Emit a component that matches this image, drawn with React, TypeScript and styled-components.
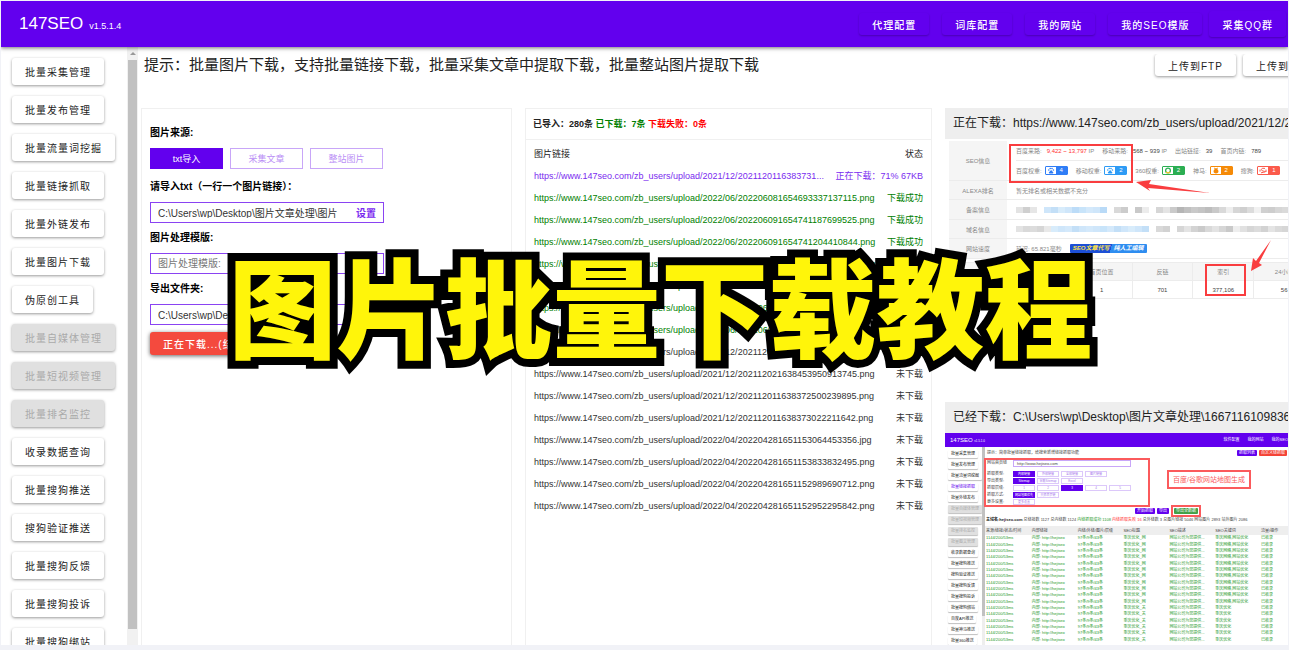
import React from "react";
import styled, { createGlobalStyle, css } from "styled-components";

const purple = "#6200ee";

const GlobalStyle = createGlobalStyle`
  *, *::before, *::after { box-sizing: border-box; }
  body {
    margin: 0;
    background: #f1f2f7;
    color: #222;
    font-family: "Liberation Sans", "Noto Sans CJK SC", sans-serif;
    font-size: 10px;
  }
  button, input { font-family: inherit; margin: 0; }
`;

const Page = styled.div`
  position: relative;
  height: 100vh;
  padding: 1px 1px 5px;
  overflow: hidden;
`;

const Shell = styled.div`
  height: 100%;
  display: flex;
  flex-direction: column;
  background: #fff;
  overflow: hidden;
`;

const TopBar = styled.header`
  position: relative;
  z-index: 1;
  flex: none;
  display: flex;
  align-items: center;
  justify-content: space-between;
  height: 46px;
  padding: 0 2px 0 18px;
  background: ${purple};
  color: #fff;
  box-shadow: 0 1px 4px rgba(0, 0, 0, 0.55);
`;

const Brand = styled.h1`
  display: flex;
  align-items: baseline;
  gap: 6px;
  margin: 0;
  font-size: 17px;
  font-weight: 400;
  small { font-size: 9px; }
`;

const Nav = styled.nav`
  display: flex;
  align-items: center;
  gap: 7px;
`;

const NavGroup = styled.div`
  display: flex;
  gap: 13px;
`;

const buttonBase = css`
  flex: none;
  border: 0;
  border-radius: 3px;
  padding: 0 13px;
  font-size: 10px;
  letter-spacing: 1px;
  white-space: nowrap;
`;

const NavButton = styled.button<{ $tall?: boolean }>`
  ${buttonBase}
  height: ${(p) => (p.$tall ? 26 : 22)}px;
  background: ${purple};
  color: #fff;
  font-weight: 500;
  box-shadow: 0 1px 2px rgba(0, 0, 0, 0.25);
`;

const RaisedButton = styled.button<{ $short?: boolean }>`
  ${buttonBase}
  height: ${(p) => (p.$short ? 22 : 27)}px;
  background: #fff;
  color: #222;
  box-shadow: 0 1px 3px rgba(0, 0, 0, 0.4);
  &:disabled { background: #e0e0e0; color: #aaa; }
`;

const Body = styled.div`
  flex: 1;
  min-height: 0;
  display: flex;
`;

const Sidebar = styled.aside`
  flex: none;
  display: flex;
  width: 137px;
`;

const Menu = styled.nav`
  flex: 1;
  display: flex;
  flex-direction: column;
  align-items: flex-start;
  gap: 11px;
  padding: 11px 0 0 11px;
  overflow: hidden;
`;

const Track = styled.div`
  display: flex;
  flex-direction: column;
  width: 11px;
  padding: 5px 1px 16px;
  background: #f1f1f1;
  align-items: center;
`;

const UpArrow = styled.div`
  border: 3px solid transparent;
  border-top: 0;
  border-bottom: 3px solid #999;
  margin-bottom: 5px;
`;

const Thumb = styled.div`
  flex: 1;
  width: 9px;
  background: #c1c1c1;
`;

const Main = styled.main`
  flex: 1;
  min-width: 0;
  display: flex;
  flex-direction: column;
`;

const HintRow = styled.div`
  flex: none;
  display: flex;
  justify-content: space-between;
  align-items: flex-start;
  height: 61px;
  padding: 7px 0 0 6px;
`;

const Hint = styled.p`
  margin: 0;
  font-size: 15px;
  line-height: 22px;
  white-space: nowrap;
`;

const Actions = styled.div`
  flex: none;
  display: flex;
  gap: 7px;
  width: 137px;
  padding: 0 0 4px 4px;
  overflow: hidden;
`;

const Columns = styled.div`
  flex: 1;
  min-height: 0;
  display: grid;
  grid-template-columns: 371fr 407fr 343fr;
  gap: 13px;
  padding-left: 3px;
`;

const Panel = styled.section`
  min-width: 0;
  overflow: hidden;
  border: 1px solid #f0f0f0;
  border-bottom: 0;
`;

const Form = styled.form`
  display: flex;
  flex-direction: column;
  align-items: flex-start;
  gap: 7px;
  padding: 16px 8px;
`;

const Field = styled.div`
  display: flex;
  flex-direction: column;
  gap: 7px;
`;

const Label = styled.label`
  font-weight: 700;
  line-height: 16px;
  color: #000;
`;

const Sources = styled.div`
  display: flex;
  gap: 7px;
  margin-bottom: 3px;
`;

const Source = styled.button<{ $on?: boolean }>`
  width: 73px;
  height: 21px;
  padding: 0;
  border: 1px solid ${(p) => (p.$on ? purple : "#c8a6f8")};
  background: ${(p) => (p.$on ? purple : "#fff")};
  color: ${(p) => (p.$on ? "#fff" : "#bb90f6")};
  font-size: 9px;
`;

const InputBox = styled.div`
  display: flex;
  align-items: center;
  width: 234px;
  height: 21px;
  padding: 0 7px;
  border: 1px solid #8a43f2;
  input {
    flex: 1;
    min-width: 0;
    border: 0;
    padding: 0;
    outline: 0;
    background: none;
    color: #333;
    font-size: 10px;
  }
  input::placeholder { color: #777; }
  a { margin-left: 12px; color: #7a2bef; font-weight: 700; text-decoration: none; }
`;

const StopButton = styled.button`
  ${buttonBase}
  height: 23px;
  background: #f44a3e;
  color: #fff;
  font-weight: 500;
  box-shadow: 0 1px 4px rgba(0, 0, 0, 0.6);
`;

const Summary = styled.p`
  margin: 0;
  padding: 0 7px;
  border-bottom: 1px solid #f0f0f0;
  font-size: 9px;
  font-weight: 700;
  line-height: 30px;
  color: #222;
  white-space: nowrap;
  .ok { color: #008000; }
  .bad { color: #f00; }
`;

const LinkTable = styled.table`
  display: block;
  margin-top: 3px;
  padding: 0 8px;
  font-size: 9px;
  line-height: 22px;
  white-space: nowrap;
  thead, tbody { display: block; }
  tr { display: flex; justify-content: space-between; }
  th, td { padding: 0; font-weight: 400; }
`;

const LinkRow = styled.tr<{ $state: string }>`
  color: ${(p) => (p.$state === "busy" ? "#7a2bef" : p.$state === "done" ? "#008000" : "#333")};
`;

const PreviewColumn = styled.section`
  min-width: 0;
  display: flex;
  flex-direction: column;
  overflow: hidden;
`;

const PreviewTitle = styled.h2`
  flex: none;
  margin: 0;
  padding: 0 0 0 8px;
  background: #eee;
  font-size: 12px;
  font-weight: 400;
  line-height: 31px;
  color: #222;
  white-space: nowrap;
  overflow: hidden;
`;

const SeoShot = styled.figure`
  position: relative;
  flex: none;
  height: 263px;
  margin: 0;
  padding: 2px 0 0 4px;
  overflow: hidden;
  font-size: 6px;
  color: #888;
  white-space: nowrap;
`;

const SeoRow = styled.div<{ $h: number }>`
  display: grid;
  grid-template-columns: 58px 1fr;
  height: ${(p) => p.$h}px;
  border-bottom: 1px solid #ececec;
`;

const SeoLabel = styled.div`
  display: flex;
  align-items: center;
  justify-content: center;
  background: #f5f5f5;
`;

const SeoCell = styled.div`
  display: flex;
  flex-direction: column;
  justify-content: center;
  padding-left: 9px;
`;

const SeoLine = styled.div<{ $rule?: boolean }>`
  flex: 1;
  display: flex;
  align-items: center;
  gap: 8px;
  border-bottom: ${(p) => (p.$rule ? "1px solid #ececec" : "0")};
  b { font-weight: 400; color: #444; margin-left: 5px; }
  b.hot { color: #f33; }
`;

const Metric = styled.span`
  display: flex;
  align-items: center;
`;

const Badge = styled.span<{ $c: string }>`
  display: flex;
  width: 23px;
  height: 9px;
  margin-left: 3px;
  border: 1px solid ${(p) => p.$c};
  border-radius: 1px;
  svg { width: 10px; height: 7px; }
  em {
    flex: 1;
    background: ${(p) => p.$c};
    color: #fff;
    font-style: normal;
    line-height: 7px;
    text-align: center;
  }
`;

const Mosaic = styled.div`
  display: flex;
  height: 6px;
`;

const Tile = styled.span<{ $c: string }>`
  flex: none;
  width: 7px;
  background: ${(p) => p.$c};
`;

const Promo = styled.span`
  width: 77px;
  height: 9px;
  background: linear-gradient(105deg, #1c4fd6 53%, #2e8df0 53%);
  border-radius: 1px;
  color: #fff;
  font-weight: 700;
  font-style: italic;
  line-height: 9px;
  text-align: center;
  i { color: #ffe34a; margin-right: 4px; }
`;

const StatTable = styled.table`
  width: 427px;
  margin-top: 3px;
  table-layout: fixed;
  border-collapse: collapse;
  text-align: center;
  th, td { height: 18px; padding: 0; border: 1px solid #ececec; font-weight: 400; }
  th { background: #f5f5f5; }
  td { color: #444; }
`;

const Marks = styled.svg`
  position: absolute;
  left: 0;
  top: 0;
`;

const AppShot = styled.figure`
  flex: 1;
  min-height: 0;
  margin: 0;
  display: flex;
  flex-direction: column;
  overflow: hidden;
  font-size: 4px;
  line-height: 6px;
  white-space: nowrap;
`;

const MiniBar = styled.div`
  flex: none;
  display: flex;
  align-items: center;
  gap: 8px;
  height: 14px;
  padding-left: 5px;
  background: ${purple};
  color: #fff;
  span:first-child { flex: 1; font-size: 6px; }
  small { font-size: 3px; }
`;

const MiniBody = styled.div`
  flex: 1;
  min-height: 0;
  display: flex;
`;

const MiniMenu = styled.div`
  flex: none;
  display: flex;
  flex-direction: column;
  align-items: flex-start;
  gap: 3px;
  width: 37px;
  padding: 3px 0 0 3px;
  overflow: hidden;
`;

const MiniItem = styled.span<{ $tone?: string }>`
  flex: none;
  height: 8px;
  padding: 0 3px;
  border-radius: 1px;
  line-height: 8px;
  background: ${(p) => (p.$tone === "off" ? "#e0e0e0" : "#fff")};
  color: ${(p) => (p.$tone === "off" ? "#aaa" : p.$tone === "on" ? purple : "#222")};
  box-shadow: 0 1px 1px rgba(0, 0, 0, 0.25);
`;

const MiniTrack = styled.div`
  flex: none;
  width: 3px;
  padding-bottom: 29px;
  background: #eee;
  &::before { content: ""; display: block; height: 100%; background: #c1c1c1; }
`;

const MiniMain = styled.div`
  flex: 1;
  min-width: 0;
  color: #444;
`;

const MiniHint = styled.div`
  display: flex;
  align-items: center;
  gap: 2px;
  height: 11px;
  padding: 0 1px 0 2px;
  span:first-child { flex: 1; }
`;

const MiniFormRow = styled.div`
  display: flex;
  align-items: center;
`;

const MiniForm = styled.div`
  width: 166px;
  height: 49px;
  padding: 0 0 0 1px;
  margin-left: -1px;
  border: 2px solid #fb5a5c;
`;

const MiniLine = styled.div<{ $first?: boolean }>`
  display: grid;
  grid-template-columns: 24px repeat(5, 22px);
  gap: 0 2px;
  height: 7px;
  margin-bottom: ${(p) => (p.$first ? 4 : 0)}px;
`;

const MiniInput = styled.span`
  grid-column: 2 / -1;
  height: 7px;
  padding-left: 3px;
  border: 1px solid #c8a6f8;
  line-height: 5px;
`;

const MiniChip = styled.span<{ $on?: boolean }>`
  height: 6px;
  border: 1px solid ${(p) => (p.$on ? purple : "#dcc8fa")};
  background: ${(p) => (p.$on ? purple : "#fff")};
  color: ${(p) => (p.$on ? "#fff" : "#a77bea")};
  font-size: 3px;
  line-height: 4px;
  text-align: center;
`;

const MapNote = styled.span`
  margin: 0 37px 6px auto;
  padding: 0 4px;
  border: 2px solid #fb5a5c;
  color: #fb5a5c;
  font-size: 7px;
  line-height: 15px;
`;

const MiniButton = styled.span<{ $c: string }>`
  padding: 0 2px;
  border-radius: 1px;
  background: ${(p) => p.$c};
  color: #fff;
  line-height: 6px;
`;

const MiniActions = styled.div`
  display: flex;
  align-items: center;
  gap: 2px;
  height: 11px;
  margin: -2px 0 0 150px;
`;

const Framed = styled.span`
  display: flex;
  padding: 1px;
  border: 2px solid #fb5a5c;
`;

const MiniStats = styled.div`
  height: 10px;
  padding-left: 1px;
  line-height: 8px;
  b { color: #222; }
  .ok { color: #1f9a2c; }
  .bad { color: #f33; }
`;

const MiniTable = styled.table`
  width: 321px;
  height: 117px;
  table-layout: fixed;
  border-spacing: 0;
  color: #1f9a2c;
  line-height: 4px;
  th { background: #eee; color: #444; font-weight: 400; height: 9px; }
  th, td { padding: 0 1px; text-align: left; overflow: hidden; }
`;

const Headline = styled.div`
  position: absolute;
  z-index: 2;
  left: 0;
  right: 0;
  top: 225px;
  padding-left: 32px;
  color: #fff50a;
  font-family: "Noto Sans CJK SC", sans-serif;
  font-size: 108px;
  font-weight: 900;
  line-height: 156px;
  text-align: center;
  white-space: nowrap;
  -webkit-text-stroke: 16px #000;
  paint-order: stroke fill;
  pointer-events: none;
`;

const menu: { name: string; off?: boolean }[] = [
  { name: "批量采集管理" },
  { name: "批量发布管理" },
  { name: "批量流量词挖掘" },
  { name: "批量链接抓取" },
  { name: "批量外链发布" },
  { name: "批量图片下载" },
  { name: "伪原创工具" },
  { name: "批量自媒体管理", off: true },
  { name: "批量短视频管理", off: true },
  { name: "批量排名监控", off: true },
  { name: "收录数据查询" },
  { name: "批量搜狗推送" },
  { name: "搜狗验证推送" },
  { name: "批量搜狗反馈" },
  { name: "批量搜狗投诉" },
  { name: "批量搜狗绑站" },
];

const root = "https://www.147seo.com/zb_users/upload/";
const links: [string, string, string][] = [
  ["2021/12/2021120116383731...", "正在下载：71% 67KB", "busy"],
  ["2022/06/202206081654693337137115.png", "下载成功", "done"],
  ["2022/06/202206091654741187699525.png", "下载成功", "done"],
  ["2022/06/202206091654741204410844.png", "下载成功", "done"],
  ["2022/06/202206091654741204410845.png", "下载成功", "done"],
  ["2022/06/202206091654741204410846.png", "下载成功", "done"],
  ["2022/06/202206091654741204410847.png", "下载成功", "done"],
  ["2022/06/202206091654741204410848.png", "下载成功", "done"],
  ["2021/12/202112021638453950913744.png", "未下载", "wait"],
  ["2021/12/202112021638453950913745.png", "未下载", "wait"],
  ["2021/12/202112011638372500239895.png", "未下载", "wait"],
  ["2021/12/202112011638373022211642.png", "未下载", "wait"],
  ["2022/04/202204281651153064453356.jpg", "未下载", "wait"],
  ["2022/04/202204281651153833832495.png", "未下载", "wait"],
  ["2022/04/202204281651152989690712.png", "未下载", "wait"],
  ["2022/04/202204281651152952295842.png", "未下载", "wait"],
];

const Paw = ({ c }: { c: string }) => (
  <svg viewBox="0 0 10 7" fill={c}>
    <circle cx="2.8" cy="3" r="0.8" />
    <circle cx="4.2" cy="1.5" r="0.8" />
    <circle cx="6" cy="1.5" r="0.8" />
    <circle cx="7.4" cy="3" r="0.8" />
    <path d="M5.1 3 7.4 5.4Q7.4 6.6 6 6.4H4.2Q2.8 6.6 2.8 5.4Z" />
  </svg>
);
const Ring = () => (
  <svg viewBox="0 0 10 7" fill="none" strokeWidth="1.3">
    <circle cx="5" cy="3.5" r="2.4" stroke="#2fb457" />
    <path d="M3 4.8A2.4 2.4 0 0 0 7 4.8" stroke="#f4c430" />
  </svg>
);
const Drop = () => (
  <svg viewBox="0 0 10 7" fill="#f58a07">
    <path d="M3 0.6 5 1.4 7 0.6 6.4 2.2Q8 3.4 7.2 5.4Q5 7.4 2.8 5.4Q2 3.4 3.6 2.2Z" />
  </svg>
);
const SogouMark = () => (
  <svg viewBox="0 0 10 7" fill="none" stroke="#fb5a4b" strokeWidth="1">
    <path d="M7 1.4Q3.4 0.6 3.4 2.4T6.6 4.4T3 5.8M2 2.6V4.6M8 2.6V5" />
  </svg>
);

const weights: [string, string, string, React.ReactNode][] = [
  ["百度权重:", "4", "#2f7df6", <Paw c="#2f7df6" />],
  ["移动权重:", "2", "#2e9bf5", <Paw c="#2e9bf5" />],
  ["360权重:", "2", "#2bae52", <Ring />],
  ["神马:", "2", "#f58a07", <Drop />],
  ["搜狗:", "1", "#fb5a4b", <SogouMark />],
];

const tilesA = "e3e3e3 cfcfcf e6e6e6 fff cfe6fa c3dff7 d8ecfb cfe6fa bcdcf8 c8e4fa d4e9fb cfe6fa b9daf7 fff d9d9d9 cccccc fff c9c9c9 ececec fff d6d6d6 e4e4e4 cacaca b5b5b5 c0c0c0 c9c9c9 c4c4c4 bdbdbd c9c9c9 d9d9d9 eeeeee d6d6d6 cfcfcf dcdcdc f1f1f1 d0d0d0 cdcdcd d6d6d6 dadada".split(" ");
const tilesB = "e3e3e3 d9d9d9 dcdcdc d6d6d6 e9e9e9 d8ecfb cfe6fa d4e9fb c3dff7 cfe6fa d4e9fb cfe6fa c8e4fa d4e9fb c3dff7 cfe6fa d8ecfb cfe6fa c3dff7 fff d9d9d9 d2d2d2 fff d6d6d6 e4e4e4 d3d3d3 cacaca d9d9d9 e3e3e3 d6d6d6 c9c9c9 eeeeee e1e1e1 d6d6d6 dcdcdc d2d2d2 e4e4e4 dadada d6d6d6".split(" ");

const SeoPreview = () => (
  <SeoShot>
    <SeoRow $h={40}>
      <SeoLabel>SEO信息</SeoLabel>
      <SeoCell>
        <SeoLine $rule>
          <Metric>百度来路:<b className="hot">9,422 ~ 13,797</b>&nbsp;IP</Metric>
          <Metric>移动来路:<b>568 ~ 939</b>&nbsp;IP</Metric>
          <Metric>出站链接:<b>39</b></Metric>
          <Metric>首页内链:<b>789</b></Metric>
        </SeoLine>
        <SeoLine>
          {weights.map(([name, n, c, icon]) => (
            <Metric key={name}>{name}<Badge $c={c}>{icon}<em>{n}</em></Badge></Metric>
          ))}
        </SeoLine>
      </SeoCell>
    </SeoRow>
    <SeoRow $h={19}>
      <SeoLabel>ALEXA排名</SeoLabel>
      <SeoCell>暂无排名或相关数据不充分</SeoCell>
    </SeoRow>
    <SeoRow $h={20}>
      <SeoLabel>备案信息</SeoLabel>
      <SeoCell><Mosaic>{tilesA.map((c, i) => <Tile key={i} $c={"#" + c} />)}</Mosaic></SeoCell>
    </SeoRow>
    <SeoRow $h={19}>
      <SeoLabel>域名信息</SeoLabel>
      <SeoCell><Mosaic>{tilesB.map((c, i) => <Tile key={i} $c={"#" + c} />)}</Mosaic></SeoCell>
    </SeoRow>
    <SeoRow $h={20}>
      <SeoLabel>网站速度</SeoLabel>
      <SeoCell>
        <SeoLine>
          <span>延迟: 65.821毫秒</span>
          <Promo><i>SEO文章代写</i>纯人工编辑</Promo>
        </SeoLine>
      </SeoCell>
    </SeoRow>
    <StatTable>
      <thead><tr><th>收录</th><th>排名</th><th>首页位置</th><th>反链</th><th>索引</th><th>24小时</th><th>一周</th></tr></thead>
      <tbody><tr><td>1,203</td><td>1</td><td>1</td><td>701</td><td>377,106</td><td>56</td><td>210</td></tr></tbody>
    </StatTable>
    <Marks width="343" height="180" fill="none" stroke="#f93d3f" strokeWidth="2">
      <rect x="65" y="6" width="122" height="37" />
      <rect x="261" y="126" width="39" height="30" />
      <path d="M191 43 206 41 204 45 265 54 203 49 205 52Z" fill="#f93d3f" stroke="none" />
      <path d="M306 132 308 119 311 122 326 101 314 124 317 126Z" fill="#f93d3f" stroke="none" />
    </Marks>
  </SeoShot>
);

const miniMenu: [string, string?][] = [
  ["批量采集管理"], ["批量发布管理"], ["批量流量词挖掘"], ["批量链接抓取", "on"], ["批量外链发布"],
  ["批量自媒体管理", "off"], ["批量短视频管理", "off"], ["批量排名监控", "off"], ["批量图文管理", "off"],
  ["收录数据查询"], ["批量搜狗推送"], ["搜狗验证推送"], ["批量搜狗反馈"], ["批量搜狗投诉"],
  ["批量搜狗绑站"], ["百度API推送"], ["批量神马推送"], ["批量360推送"],
];

const miniLines: [string, string[], number][] = [
  ["抓取类型:", ["内部链接", "外部链接", "全部链接", "图片链接"], 0],
  ["导出类型:", ["Sitemap", "谷歌Sitemap", "Excel"], 0],
  ["抓取层级:", ["1", "2", "3", "4", "5"], 2],
  ["抓取方式:", ["网站地图优先", "只抓首页链"], 0],
  ["更多设置:", ["更多设置"], -1],
];

const AppPreview = () => (
  <AppShot>
    <MiniBar>
      <span>147SEO <small>v1.5.1.0</small></span>
      <span>软件配置</span><span>我的网站</span><span>我的SEO</span>
    </MiniBar>
    <MiniBody>
      <MiniMenu>
        {miniMenu.map(([name, tone]) => <MiniItem key={name} $tone={tone}>{name}</MiniItem>)}
      </MiniMenu>
      <MiniTrack />
      <MiniMain>
        <MiniHint>
          <span>提示：简单批量链接抓取，给搜索新增链接抓取功能</span>
          <MiniButton $c={purple}>抓取列表</MiniButton>
          <MiniButton $c="#f44336">自定义链抓取</MiniButton>
        </MiniHint>
        <MiniFormRow>
          <MiniForm>
            <MiniLine $first><span>网站首页链</span><MiniInput>http://www.hejiseo.com</MiniInput></MiniLine>
            {miniLines.map(([name, opts, on]) => (
              <MiniLine key={name}>
                <span>{name}</span>
                {opts.map((o, i) => <MiniChip key={o} $on={i === on}>{o}</MiniChip>)}
              </MiniLine>
            ))}
          </MiniForm>
          <MapNote>百度/谷歌网站地图生成</MapNote>
        </MiniFormRow>
        <MiniActions>
          <MiniButton $c={purple}>开始抓取</MiniButton>
          <MiniButton $c={purple}>导出</MiniButton>
          <Framed><MiniButton $c="#43a047">导出全数据</MiniButton></Framed>
        </MiniActions>
        <MiniStats>
          <b>主域名:hejiseo.com</b> 总链接数 1127 总内链数 1124 <span className="ok">内链抓取成功 1108</span>{" "}
          <span className="bad">内链抓取失败 16</span> 总外链数 3 总图片链接 5046 网站图片 2893 站外图片 2086
        </MiniStats>
        <MiniTable>
          <thead><tr><th>来源/链接/状态/时间</th><th>内部链接</th><th>内链/外链/图片/层级</th><th>SEO标题</th><th>SEO描述</th><th>SEO关键词</th><th>流量/操作</th></tr></thead>
          <tbody>
            {Array.from({ length: 17 }, (_, i) => (
              <tr key={i}>
                <td>1144/200/53ms</td>
                <td>内部: http://hejiseo</td>
                <td>97条/9条/43条</td>
                <td>{i < 11 ? "重庆优化_网" : "重庆优化_关"}</td>
                <td>网站公司为您提供...</td>
                <td>{i < 11 ? "重庆网络,网站优化" : "重庆优化"}</td>
                <td>已收录</td>
              </tr>
            ))}
          </tbody>
        </MiniTable>
      </MiniMain>
    </MiniBody>
  </AppShot>
);

export default function App() {
  return (
    <Page>
      <GlobalStyle />
      <Shell>
        <TopBar>
          <Brand>147SEO <small>v1.5.1.4</small></Brand>
          <Nav>
            <NavGroup>
              <NavButton>代理配置</NavButton>
              <NavButton>词库配置</NavButton>
              <NavButton>我的网站</NavButton>
              <NavButton>我的SEO模版</NavButton>
            </NavGroup>
            <NavButton $tall>采集QQ群</NavButton>
          </Nav>
        </TopBar>
        <Body>
          <Sidebar>
            <Menu>
              {menu.map((m) => <RaisedButton key={m.name} disabled={m.off}>{m.name}</RaisedButton>)}
            </Menu>
            <Track><UpArrow /><Thumb /></Track>
          </Sidebar>
          <Main>
            <HintRow>
              <Hint>提示：批量图片下载，支持批量链接下载，批量采集文章中提取下载，批量整站图片提取下载</Hint>
              <Actions>
                <RaisedButton $short>上传到FTP</RaisedButton>
                <RaisedButton $short>上传到OSS</RaisedButton>
              </Actions>
            </HintRow>
            <Columns>
              <Panel>
                <Form onSubmit={(e) => e.preventDefault()}>
                  <Field>
                    <Label as="span" id="source">图片来源:</Label>
                    <Sources role="group" aria-labelledby="source">
                      <Source type="button" $on>txt导入</Source>
                      <Source type="button">采集文章</Source>
                      <Source type="button">整站图片</Source>
                    </Sources>
                  </Field>
                  <Field>
                    <Label htmlFor="txt">请导入txt（一行一个图片链接）：</Label>
                    <InputBox>
                      <input id="txt" defaultValue="C:\Users\wp\Desktop\图片文章处理\图片" />
                      <a href="#txt">设置</a>
                    </InputBox>
                  </Field>
                  <Field>
                    <Label htmlFor="template">图片处理模版:</Label>
                    <InputBox><input id="template" placeholder="图片处理模版:" /></InputBox>
                  </Field>
                  <Field>
                    <Label htmlFor="folder">导出文件夹:</Label>
                    <InputBox><input id="folder" defaultValue="C:\Users\wp\Desktop\图片文章处理" /></InputBox>
                  </Field>
                  <StopButton type="button">正在下载...(结束下载)</StopButton>
                </Form>
              </Panel>
              <Panel>
                <Summary>
                  已导入：280条 <span className="ok">已下载：7条</span> <span className="bad">下载失败：0条</span>
                </Summary>
                <LinkTable>
                  <thead><tr><th>图片链接</th><th>状态</th></tr></thead>
                  <tbody>
                    {links.map(([path, status, state]) => (
                      <LinkRow key={path} $state={state}><td>{root + path}</td><td>{status}</td></LinkRow>
                    ))}
                  </tbody>
                </LinkTable>
              </Panel>
              <PreviewColumn>
                <PreviewTitle>正在下载：https://www.147seo.com/zb_users/upload/2021/12/202112011638373100.png</PreviewTitle>
                <SeoPreview />
                <PreviewTitle>已经下载：C:\Users\wp\Desktop\图片文章处理\1667116109836.png</PreviewTitle>
                <AppPreview />
              </PreviewColumn>
            </Columns>
          </Main>
        </Body>
      </Shell>
      <Headline>图片批量下载教程</Headline>
    </Page>
  );
}
